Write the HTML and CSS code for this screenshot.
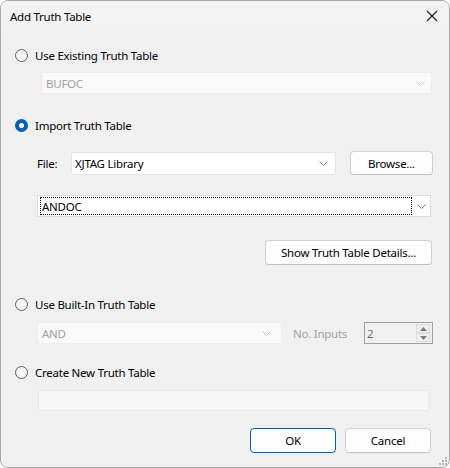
FILE: index.html
```html
<!DOCTYPE html>
<html>
<head>
<meta charset="utf-8">
<link rel="stylesheet" href="styles.css">
</head>
<body>
<div class="window">
  <div class="titlebar">
    <span class="title">Add Truth Table</span>
    <svg class="close" width="12" height="12" viewBox="0 0 12 12"><path d="M1 1 L11 11 M11 1 L1 11" stroke="#1a1a1a" stroke-width="1.1" fill="none"/></svg>
  </div>
  <div class="content">
    <div class="radio-row r1"><span class="radio"></span><span>Use Existing Truth Table</span></div>
    <div class="combo disabled c1"><span class="val">BUFOC</span><svg class="chev" width="9" height="5" viewBox="0 0 9 5"><path d="M0.5 0.5 L4.5 4.5 L8.5 0.5" stroke="#c4c4c4" fill="none"/></svg></div>

    <div class="radio-row r2"><span class="radio checked"></span><span>Import Truth Table</span></div>
    <div class="file-row">
      <span class="file-label">File:</span>
      <div class="combo file-combo"><span class="val">XJTAG Library</span><svg class="chev" width="9" height="5" viewBox="0 0 9 5"><path d="M0.5 0.5 L4.5 4.5 L8.5 0.5" stroke="#7a7a7a" fill="none"/></svg></div>
      <button class="btn browse">Browse...</button>
    </div>
    <div class="combo andoc"><span class="focus">ANDOC</span><svg class="chev" width="9" height="5" viewBox="0 0 9 5"><path d="M0.5 0.5 L4.5 4.5 L8.5 0.5" stroke="#7a7a7a" fill="none"/></svg></div>
    <div class="details-row"><button class="btn details">Show Truth Table Details...</button></div>

    <div class="radio-row r3"><span class="radio"></span><span>Use Built-In Truth Table</span></div>
    <div class="builtin-row">
      <div class="combo disabled and-combo"><span class="val">AND</span><svg class="chev" width="9" height="5" viewBox="0 0 9 5"><path d="M0.5 0.5 L4.5 4.5 L8.5 0.5" stroke="#c4c4c4" fill="none"/></svg></div>
      <span class="inputs-label">No. Inputs</span>
      <div class="spinner">
        <span class="spin-val">2</span>
        <div class="spin-btns">
          <span class="spin-btn"><svg width="7" height="4" viewBox="0 0 7 4"><path d="M0 4 L3.5 0 L7 4 Z" fill="#7a7a7a"/></svg></span>
          <span class="spin-btn"><svg width="7" height="4" viewBox="0 0 7 4"><path d="M0 0 L3.5 4 L7 0 Z" fill="#7a7a7a"/></svg></span>
        </div>
      </div>
    </div>

    <div class="radio-row r4"><span class="radio"></span><span>Create New Truth Table</span></div>
    <div class="textfield"></div>

    <div class="footer">
      <button class="btn ok">OK</button>
      <button class="btn cancel">Cancel</button>
    </div>
  </div>
  <svg class="grip" width="10" height="10" viewBox="0 0 10 10">
    <rect x="8" y="2" width="2" height="2" fill="#b5b5b5"/>
    <rect x="5" y="5" width="2" height="2" fill="#b5b5b5"/>
    <rect x="8" y="5" width="2" height="2" fill="#b5b5b5"/>
    <rect x="2" y="8" width="2" height="2" fill="#b5b5b5"/>
    <rect x="5" y="8" width="2" height="2" fill="#b5b5b5"/>
    <rect x="8" y="8" width="2" height="2" fill="#b5b5b5"/>
  </svg>
</div>
</body>
</html>
```

FILE: styles.css
```css
* { box-sizing: border-box; }
html, body { margin: 0; padding: 0; background: #ffffff; }
body {
  font-family: "Noto Sans", "Open Sans", sans-serif;
  font-size: 11.5px;
  letter-spacing: -0.25px;
  color: #000;
}
.window {
  position: relative;
  width: 450px;
  height: 468px;
  border: 1px solid #a9a9a9;
  border-radius: 8px;
  background: #f0f0f0;
  overflow: hidden;
}
.titlebar {
  height: 30px;
  background: #f3f3f3;
  display: flex;
  align-items: center;
  justify-content: space-between;
  padding: 0 10px 0 9px;
}
.title { color: #000; }
.close { margin-right: 1px; }
.content {
  display: flex;
  flex-direction: column;
  padding-left: 14px;
}
.radio-row {
  display: flex;
  align-items: center;
  height: 16px;
  gap: 7px;
}
.radio {
  width: 13px;
  height: 13px;
  border-radius: 50%;
  border: 1px solid #5d5d5d;
  background: #f5f5f5;
  flex: none;
}
.radio.checked {
  border: 4px solid #005fb8;
  background: #ffffff;
}
.r1 { margin-top: 16px; }
.r2 { margin-top: 23px; }
.r3 { margin-top: 31px; }
.r4 { margin-top: 20px; }

.combo {
  display: flex;
  align-items: center;
  justify-content: space-between;
  background: #ffffff;
  border: 1px solid #e3e3e3;
  border-radius: 3px;
  padding: 0 6px 0 4px;
}
.combo.disabled {
  background: #f9f9f9;
  border-color: #ededed;
  color: #a0a0a0;
}
.c1 {
  margin-top: 9px;
  margin-left: 26px;
  width: 391px;
  height: 22px;
}
.file-row {
  margin-top: 18px;
  display: flex;
  align-items: center;
  height: 24px;
  margin-left: 22px;
}
.file-label { width: 34px; }
.file-combo {
  width: 265px;
  height: 23px;
  padding-left: 3px;
  padding-right: 7px;
}
.btn {
  font-family: inherit;
  font-size: 11.5px;
  letter-spacing: -0.25px;
  color: #000;
  background: #fdfdfd;
  border: 1px solid #d0d0d0;
  border-bottom-color: #c0c0c0;
  border-radius: 4px;
  padding: 0;
  height: 25px;
}
.browse {
  margin-left: 14px;
  width: 83px;
  height: 24px;
}
.andoc {
  margin-top: 20px;
  margin-left: 22px;
  width: 394px;
  height: 22px;
  border-radius: 0;
  padding: 0 4px 0 2px;
  border-color: #dcdcdc;
}
.focus {
  width: 372px;
  height: 18px;
  border: 1px dotted #000;
  display: flex;
  align-items: center;
  padding-left: 1px;
}
.details-row {
  margin-top: 23px;
  display: flex;
  justify-content: flex-end;
  padding-right: 17px;
}
.details { width: 167px; }

.builtin-row {
  margin-top: 10px;
  margin-left: 22px;
  display: flex;
  align-items: center;
  height: 22px;
}
.and-combo {
  width: 245px;
  height: 22px;
  padding-left: 4px;
  padding-right: 10px;
}
.inputs-label {
  margin-left: 11px;
  color: #a0a0a0;
  width: 71px;
}
.spinner {
  width: 69px;
  height: 22px;
  border: 1px solid #a0a0a0;
  display: flex;
  align-items: center;
  justify-content: space-between;
  padding: 0 2px 0 2px;
}
.spin-val { color: #6d6d6d; }
.spin-btns {
  display: flex;
  flex-direction: column;
  gap: 0;
}
.spin-btn {
  width: 14px;
  height: 9px;
  border: 1px solid #dcdcdc;
  background: #efefef;
  display: flex;
  align-items: center;
  justify-content: center;
}
.textfield {
  margin-top: 10px;
  margin-left: 23px;
  width: 391px;
  height: 21px;
  background: #f6f6f6;
  border: 1px solid #e8e8e8;
}
.footer {
  margin-top: 17px;
  display: flex;
  justify-content: flex-end;
  gap: 9px;
  padding-right: 18px;
}
.ok, .cancel { width: 86px; }
.ok { border: 1px solid #005fb8; }
.grip {
  position: absolute;
  right: 2px;
  bottom: 2px;
}
```
